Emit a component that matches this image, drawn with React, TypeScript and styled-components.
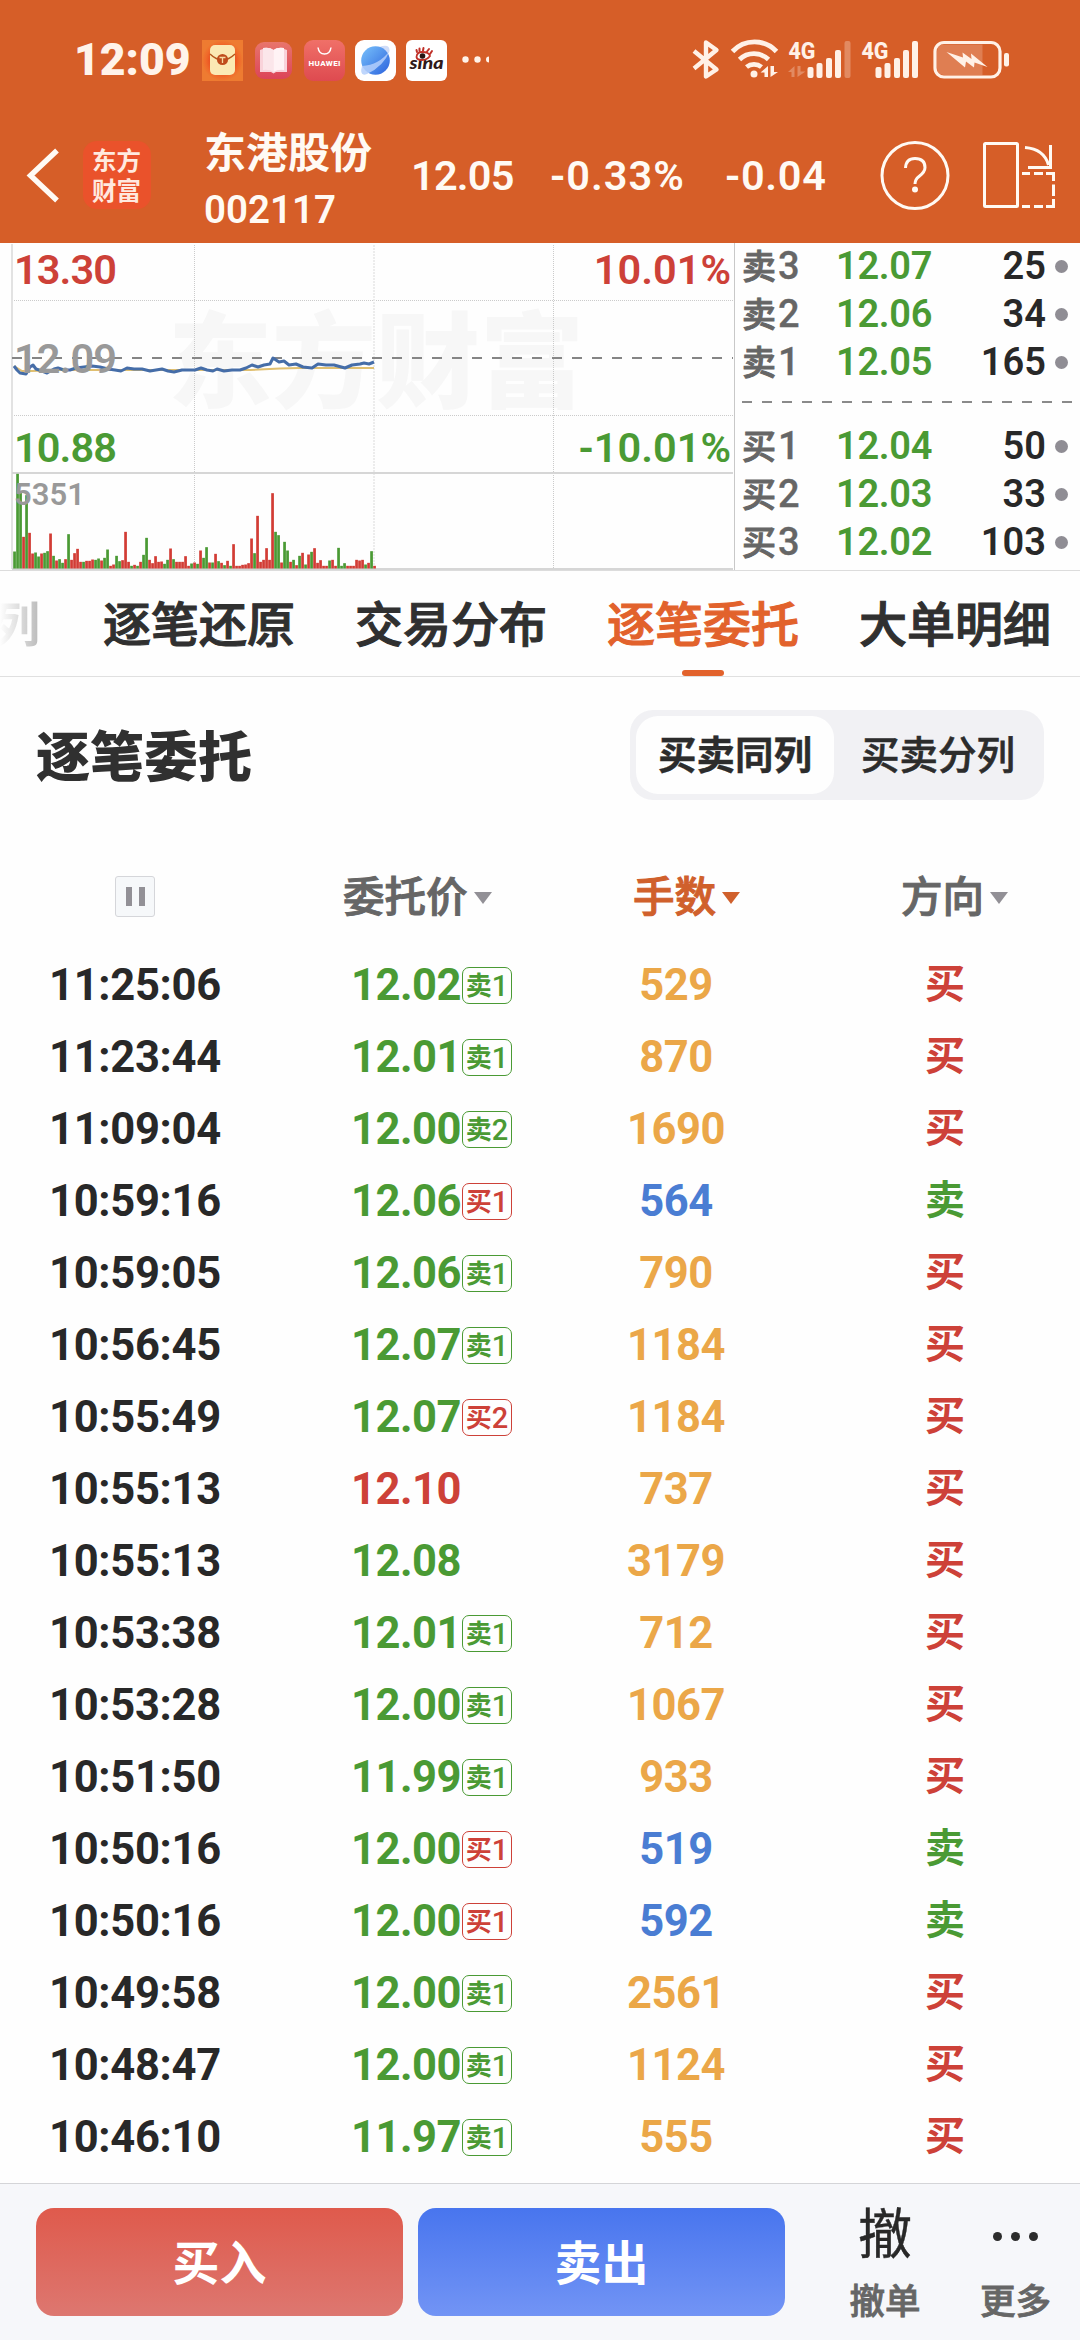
import React from "react";
import styled, { createGlobalStyle } from "styled-components";

const RED = "#cd4138";
const GREEN = "#4a9a34";
const ORANGE = "#eba748";
const BLUE = "#4a7dd3";
const BRAND = "#d65e28";

const GlobalStyle = createGlobalStyle`
  * { box-sizing: border-box; }
  body {
    margin: 0;
    background: #fefefe;
    font-family: Roboto, "Noto Sans CJK SC", sans-serif;
  }
`;

const Page = styled.div`
  width: 1080px;
  height: 2340px;
  display: flex;
  flex-direction: column;
  overflow: hidden;
  background: #fefefe;
  color: #282828;
  white-space: nowrap;
`;

/* ---------- top area ---------- */

const Top = styled.header`
  height: 243px;
  flex: none;
  background: ${BRAND};
  color: #fffaf4;
`;

const StatusBar = styled.div`
  height: 120px;
  padding: 0 70px 0 74px;
  display: flex;
  align-items: center;
`;

const Clock = styled.span`
  width: 128px;
  font-size: 44.5px;
  font-weight: 900;
  line-height: 60px;
  color: #fff3ea;
`;

const AppIcons = styled.div`
  display: flex;
  align-items: center;
`;

const StatusGlyphs = styled.div`
  margin-left: auto;
  display: flex;
  align-items: center;
`;

const NavBar = styled.div`
  height: 123px;
  display: flex;
  align-items: flex-start;
`;

const BackArrow = styled.svg`
  width: 36px;
  height: 60px;
  margin: 25px 0 0 25px;
`;

const Logo = styled.div`
  width: 68px;
  height: 68px;
  margin: 21px 0 0 22px;
  border-radius: 14px;
  background: #ea522b;
  color: #ffe9df;
  padding: 4px 0 0 9px;
  font: 700 24.5px/30px "Noto Sans CJK SC", sans-serif;
  white-space: normal;
  word-break: break-all;
`;

const StockName = styled.div`
  width: 207px;
  margin: 4px 0 0 53px;
  display: flex;
  flex-direction: column;
`;

const Name = styled.span`
  font-size: 42px;
  line-height: 60px;
  font-weight: 700;
`;

const Code = styled.span`
  font-size: 38.5px;
  line-height: 52px;
  font-weight: 600;
`;

const Quote = styled.span<{ $w: number; $ls?: number }>`
  width: ${(p) => p.$w}px;
  margin-top: 31px;
  font-size: 41.5px;
  line-height: 50px;
  font-weight: 600;
  letter-spacing: ${(p) => p.$ls ?? 0}px;
`;

const HelpIcon = styled.svg`
  width: 72px;
  height: 72px;
  margin-top: 20px;
`;

const RotateIcon = styled.svg`
  width: 78px;
  height: 72px;
  margin: 19px 0 0 30px;
`;

/* ---------- chart + order book ---------- */

const Market = styled.section`
  height: 328px;
  flex: none;
  display: flex;
  border-bottom: 1px solid #dcdcdc;
`;

const ChartPane = styled.div`
  width: 735px;
  height: 327px;
  position: relative;
  isolation: isolate;
  border-right: 1px solid #c8c8c8;
`;

const ChartSvg = styled.svg`
  display: block;
  width: 734px;
  height: 327px;
`;

const Watermark = styled.span`
  position: absolute;
  left: 168px;
  top: 50px;
  z-index: -1;
  color: #f7f7f7;
  font: 900 104px/124px "Noto Sans CJK SC", sans-serif;
`;

const AxisLabel = styled.span<{ $top: number; $color: string; $right?: boolean; $small?: boolean }>`
  position: absolute;
  top: ${(p) => p.$top}px;
  ${(p) => (p.$right ? "right: 3px;" : "left: 14px;")}
  color: ${(p) => p.$color};
  font-size: ${(p) => (p.$small ? 31 : 41.5)}px;
  letter-spacing: ${(p) => (p.$right || p.$small ? 0 : -0.9)}px;
  line-height: 50px;
  font-weight: 600;
`;

const Book = styled.div`
  flex: 1;
  padding-left: 7px;
`;

const BookRow = styled.div`
  height: 48px;
  display: flex;
  align-items: center;
  font-size: 38px;
  line-height: 48px;
  font-weight: 600;
  & > * { position: relative; top: -1px; }
`;

const BookSide = styled.span`
  width: 94px;
  color: #666;
  font-size: 34px;
  font-weight: 500;
  -webkit-text-stroke: 0.9px currentColor;
  & > b {
    font-size: 38px;
    font-weight: 500;
    margin-left: 2px;
    -webkit-text-stroke: 0.3px currentColor;
  }
`;

const BookPrice = styled.span`
  width: 104px;
  color: ${GREEN};
  letter-spacing: -0.3px;
`;

const BookVolume = styled.span`
  width: 106px;
  text-align: right;
`;

const Dot = styled.i`
  width: 13px;
  height: 13px;
  margin-left: 9px;
  border-radius: 50%;
  background: #8f8d94;
`;

const BookDivider = styled.div`
  height: 2px;
  width: 330px;
  margin: 14px 0 20px;
  background: repeating-linear-gradient(90deg, #8a8a8a 0 10px, transparent 10px 20px);
`;

/* ---------- tabs ---------- */

const Tabs = styled.nav`
  height: 106px;
  flex: none;
  display: flex;
  justify-content: flex-start;
  gap: 60px;
  border-bottom: 1px solid #e0e0e0;
`;

const Tab = styled.div<{ $active?: boolean }>`
  height: 105px;
  display: flex;
  flex-direction: column;
  align-items: center;
  justify-content: space-between;
  font-size: 48px;
  line-height: 109px;
  font-weight: 500;
  color: ${(p) => (p.$active ? "#e2622c" : "#303030")};
  -webkit-text-stroke: 1.1px currentColor;
  & > span { height: 98px; }
`;

const CutTab = styled.div`
  width: 40px;
  margin-right: 3px;
  flex: none;
  display: flex;
  justify-content: flex-end;
  font-size: 48px;
  line-height: 109px;
  font-weight: 700;
  overflow: hidden;
  color: transparent;
  background: linear-gradient(90deg, #fefefe 0, #b9b9b9 40px);
  background-clip: text;
  -webkit-background-clip: text;
`;

const Underline = styled.i`
  width: 42px;
  height: 6px;
  border-radius: 3px;
  background: #e2622c;
`;

/* ---------- order list ---------- */

const TitleRow = styled.div`
  height: 157px;
  flex: none;
  padding: 33px 36px 0;
  display: flex;
  justify-content: space-between;
  align-items: flex-start;
`;

const Title = styled.h1`
  margin: 0;
  font-size: 54px;
  line-height: 98px;
  font-weight: 900;
  color: #303030;
`;

const Segmented = styled.div`
  width: 414px;
  height: 90px;
  padding: 6px;
  display: flex;
  border-radius: 23px;
  background: #f1f1f4;
`;

const Segment = styled.div<{ $on?: boolean }>`
  width: ${(p) => (p.$on ? 198 : 208)}px;
  flex: none;
  height: 78px;
  display: flex;
  justify-content: center;
  border-radius: 22px;
  font-size: 38.5px;
  line-height: 80px;
  font-weight: ${(p) => (p.$on ? 700 : 500)};
  -webkit-text-stroke: ${(p) => (p.$on ? 0.4 : 0.6)}px currentColor;
  color: #2c2c2c;
  background: ${(p) => (p.$on ? "#fefefe" : "transparent")};
`;

const HeadRow = styled.div`
  height: 114px;
  flex: none;
  padding-top: 26px;
  display: flex;
`;

const HeadCell = styled.div<{ $w: number; $pad: number; $active?: boolean }>`
  width: ${(p) => p.$w}px;
  padding-left: ${(p) => p.$pad}px;
  height: 76px;
  display: flex;
  align-items: center;
  gap: 6px;
  font-size: 41.5px;
  line-height: 76px;
  font-weight: 500;
  -webkit-text-stroke: 1px currentColor;
  color: ${(p) => (p.$active ? "#d0602c" : "#666")};
`;

const Caret = styled.i<{ $active?: boolean }>`
  border: 9px solid transparent;
  border-bottom: 0;
  border-top: 12px solid ${(p) => (p.$active ? "#d0602c" : "#929096")};
`;

const PauseBox = styled.div`
  width: 40px;
  height: 41px;
  margin-bottom: 3px;
  display: flex;
  align-items: center;
  justify-content: center;
  gap: 7px;
  border: 1.5px solid #d5d6da;
  border-radius: 3px;
  background: #f6f8fa;
  & > i { width: 6px; height: 19px; background: #929096; }
`;

const Row = styled.div`
  height: 72px;
  flex: none;
  display: flex;
  align-items: center;
  font-size: 43.5px;
  line-height: 72px;
  font-weight: 700;
  & > span { flex: none; }
`;

const Time = styled.span`
  width: 351px;
  padding: 3px 0 0 49px;
  letter-spacing: -0.3px;
`;

const Price = styled.span<{ $color: string }>`
  width: 111px;
  padding-top: 3px;
  color: ${(p) => p.$color};
  letter-spacing: -0.5px;
`;

const BadgeCell = styled.span`
  width: 114px;
  display: flex;
  align-items: center;
`;

const Badge = styled.span<{ $color: string }>`
  width: 50px;
  height: 37px;
  margin-top: 3px;
  border: 1.2px solid ${(p) => p.$color};
  border-radius: 7px;
  color: ${(p) => p.$color};
  display: flex;
  align-items: center;
  justify-content: center;
  font-size: 26px;
  line-height: 34px;
  font-weight: 700;
  & > b { font-size: 29px; font-weight: 500; }
`;

const Lots = styled.span<{ $color: string }>`
  width: 200px;
  padding-top: 3px;
  text-align: center;
  letter-spacing: -0.4px;
  color: ${(p) => p.$color};
`;

const Direction = styled.span<{ $color: string }>`
  width: 304px;
  padding: 2px 0 0 34px;
  text-align: center;
  font-size: 40px;
  font-weight: 700;
  color: ${(p) => p.$color};
`;

/* ---------- bottom bar ---------- */

const BottomBar = styled.footer`
  height: 157px;
  flex: none;
  margin-top: auto;
  padding: 24px 0 0 36px;
  display: flex;
  align-items: flex-start;
  border-top: 1px solid #d4d5d8;
  background: #f6f7fa;
`;

const TradeButton = styled.div<{ $from: string; $to: string }>`
  width: 367px;
  flex: none;
  height: 108px;
  margin-right: 15px;
  border-radius: 18px;
  text-align: center;
  font-size: 47px;
  line-height: 111px;
  font-weight: 700;
  color: #fff;
  background: linear-gradient(${(p) => p.$from}, ${(p) => p.$to});
`;

const Action = styled.div<{ $w: number }>`
  width: ${(p) => p.$w}px;
  flex: none;
  display: flex;
  flex-direction: column;
  align-items: center;
`;

const ActionGlyph = styled.span`
  height: 56px;
  display: flex;
  align-items: center;
  gap: 9px;
  font-size: 54px;
  line-height: 56px;
  font-weight: 400;
  color: #282828;
  -webkit-text-stroke: 0.4px currentColor;
  & > i { width: 9px; height: 9px; border-radius: 50%; background: #2c2c2c; }
`;

const ActionLabel = styled.span`
  margin-top: 13px;
  font-size: 35.5px;
  line-height: 50px;
  font-weight: 500;
  -webkit-text-stroke: 0.8px currentColor;
  color: #666;
`;

/* ---------- data ---------- */

type Order = [time: string, price: string, tag: string, lots: number, dir: "买" | "卖"];

const orders: Order[] = [
  ["11:25:06", "12.02", "卖1", 529, "买"],
  ["11:23:44", "12.01", "卖1", 870, "买"],
  ["11:09:04", "12.00", "卖2", 1690, "买"],
  ["10:59:16", "12.06", "买1", 564, "卖"],
  ["10:59:05", "12.06", "卖1", 790, "买"],
  ["10:56:45", "12.07", "卖1", 1184, "买"],
  ["10:55:49", "12.07", "买2", 1184, "买"],
  ["10:55:13", "12.10", "", 737, "买"],
  ["10:55:13", "12.08", "", 3179, "买"],
  ["10:53:38", "12.01", "卖1", 712, "买"],
  ["10:53:28", "12.00", "卖1", 1067, "买"],
  ["10:51:50", "11.99", "卖1", 933, "买"],
  ["10:50:16", "12.00", "买1", 519, "卖"],
  ["10:50:16", "12.00", "买1", 592, "卖"],
  ["10:49:58", "12.00", "卖1", 2561, "买"],
  ["10:48:47", "12.00", "卖1", 1124, "买"],
  ["10:46:10", "11.97", "卖1", 555, "买"],
];

const asks = [["卖", "3", "12.07", "25"], ["卖", "2", "12.06", "34"], ["卖", "1", "12.05", "165"]];
const bids = [["买", "1", "12.04", "50"], ["买", "2", "12.03", "33"], ["买", "3", "12.02", "103"]];

const volumes = (
  "51g 284g 230g 95r 220g 107r 45r 48g 36g 45r 47g 52g 105r 38g 24r 28g 17g 28r 103g 26r 46r 59r 20r 20g 23r 23r 27r 26g 30g 24r " +
  "32g 57g 8r 12r 38g 22g 25r 110r 20r 8g 11r 8g 20r 41g 92g 26r 16r 37r 20r 21r 14g 26g 60r 28g 20r 20r 20r 37r 8r 15g " +
  "18r 14g 54r 32g 64g 18r 18g 44r 22g 17r 10g 23r 8g 73r 8r 8r 11r 12r 16r 90r 46g 158r 20r 26r 61r 26r 226r 110g 100g 18r " +
  "80g 54g 20r 26g 10r 38g 47r 12g 42r 50g 61r 17r 25r 8r 8r 24g 26r 8r 62g 8g 16g 8r 8r 8r 26r 24r 26r 12g 17r 52g 8r"
).split(" ").map((s) => ({ h: parseInt(s, 10) / 3, up: s.endsWith("r") }));

const pricePath =
  "M14 123 L17 127 L20 130 L26 131 L30 124 L33 122 L36 126 L42 128 L47 130 L54 126 L58 125 L64 127 L70 127 L76 125 L84 124 L92 123 L100 124 L108 126 L115 127 L121 128 L127 125 L134 126 L142 126 L150 128 L162 126 L168 128 L174 129 L182 127 L188 127 L195 127 L201 125 L207 127 L213 128 L217 126 L224 128 L232 127 L240 127 L246 125 L252 122 L258 124 L264 122 L270 121 L273 115 L279 119 L284 118 L289 122 L296 121 L303 124 L312 125 L318 121 L326 122 L334 122 L345 125 L352 122 L360 121 L364 120 L369 121 L374 119";

const avgPath = "M14 123 L22 128 L32 128 L60 127 L100 127 L160 127 L250 127 L280 125.5 L300 125 L374 125";

/* ---------- drawings ---------- */

const Chart = () => (
  <ChartSvg viewBox="0 0 734 327">
    <g stroke="#cbcbcb" strokeWidth="1" strokeDasharray="1 1" fill="none">
      <path d="M12 57.5H733M12 172.5H733" />
      <path d="M194.5 2V326M553.5 2V326" />
    </g>
    <path d="M374 2V326" stroke="#ececec" strokeWidth="2" strokeDasharray="2 1" />
    <path d="M12 1V326" stroke="#e2e2e2" strokeWidth="2" />
    <path d="M12 230H733M12 326H733" stroke="#d6d6d6" strokeWidth="2" />
    <path d="M12 115H733" stroke="#858585" strokeWidth="2" strokeDasharray="10 10" />
    <path d={avgPath} stroke="#e0bf70" strokeWidth="2" fill="none" />
    <path d={pricePath} stroke="#456da8" strokeWidth="3" strokeLinejoin="round" fill="none" />
    {volumes.map((v, i) => (
      <rect key={i} x={13.2 + i * 3} y={325.5 - v.h} width="2.7" height={v.h} fill={v.up ? "#d23c35" : "#4a9a34"} />
    ))}
  </ChartSvg>
);

const StatusApps = () => (
  <svg width="290" height="44" viewBox="202 38 290 44">
    <defs>
      <radialGradient id="envBg">
        <stop offset="0.5" stopColor="#e8451c" />
        <stop offset="0.8" stopColor="#f0692a" />
        <stop offset="1" stopColor="#ee7b31" />
      </radialGradient>
      <linearGradient id="bookBg" x1="0" y1="0" x2="0" y2="1">
        <stop offset="0" stopColor="#e8756c" />
        <stop offset="1" stopColor="#dc4458" />
      </linearGradient>
      <linearGradient id="hwBg" x1="0" y1="0" x2="0" y2="1">
        <stop offset="0" stopColor="#f07068" />
        <stop offset="1" stopColor="#de4a50" />
      </linearGradient>
      <linearGradient id="globe" x1="0" y1="0" x2="1" y2="1">
        <stop offset="0" stopColor="#79c2fb" />
        <stop offset="1" stopColor="#2b62dd" />
      </linearGradient>
    </defs>
    <rect x="202" y="40" width="41" height="41" fill="url(#envBg)" />
    <rect x="210" y="45" width="25" height="30" rx="5" fill="#fbe9b4" />
    <path d="M210 54Q222.500 66 235 54" fill="none" stroke="#b4561c" strokeWidth="1.4" />
    <circle cx="222.500" cy="59.500" r="5.600" fill="#c04c1c" />
    <path d="M219.500 57.500H225.500M222.500 57.500V63" stroke="#f7d9a0" strokeWidth="1.300" />
    <rect x="255" y="42" width="37" height="37" rx="9" fill="url(#bookBg)" />
    <path d="M260 50L263 49V48Q270 47 273.500 50Q277 47 284 48V49L287 50V72H276L273.500 73.500L271 72H260Z" fill="#f9d3da" />
    <path d="M263 48Q270 47 273.500 50V72Q269 69 263 70Z" fill="#fbe6ea" />
    <path d="M284 48Q277 47 273.500 50V72Q278 69 284 70Z" fill="#fff3f5" />
    <rect x="304" y="40" width="41" height="41" rx="9" fill="url(#hwBg)" />
    <path d="M318 47.500Q319 54 324.500 54Q330 54 331 47.500" fill="none" stroke="#fff" strokeWidth="1.500" />
    <text x="324.500" y="66" textAnchor="middle" textLength="32" fontFamily="Roboto, sans-serif" fontSize="8" fontWeight="800" fill="#fff">HUAWEI</text>
    <rect x="355" y="40" width="41" height="41" rx="9" fill="#fff" />
    <path d="M379 47Q390 43 389.500 51L386 56Z" fill="#cfdcf8" />
    <circle cx="375.500" cy="60.500" r="14.300" fill="url(#globe)" />
    <path d="M362 66Q359 77 367 74Q384 66 389.500 51Q379 65 362 66Z" fill="#b4cffb" fillOpacity="0.85" />
    <rect x="406" y="40" width="41" height="41" rx="6" fill="#fff" />
    <text x="426.500" y="68.500" textAnchor="middle" textLength="34" lengthAdjust="spacingAndGlyphs" fontFamily="Lato, sans-serif" fontSize="17" fontWeight="900" fontStyle="italic" fill="#30191a">sina</text>
    <path d="M416.500 57Q417 52 422 52Q429 52 430 56Q427 60 422 60Q417 60 416.500 57Z" fill="#fff" stroke="#c03028" strokeWidth="1.800" />
    <circle cx="422.500" cy="56" r="2.800" fill="#261312" />
    <path d="M417 52L416.500 50M419.500 51V48.500M423 50.500L423.500 48M427 51.500L429 49M430 54L432 51" stroke="#c03028" strokeWidth="2" strokeLinecap="round" />
    <circle cx="465.500" cy="59.500" r="3.200" fill="#fff3ea" />
    <circle cx="477.500" cy="59.500" r="3.200" fill="#fff3ea" />
    <path d="M489 56.500A3 3 0 0 0 489 62.500Z" fill="#fff3ea" />
  </svg>
);

const StatusRight = () => (
  <svg width="318" height="60" viewBox="692 30 318 60" fill="#fff1e7">
    <g fill="none" stroke="#fff1e7" strokeLinejoin="round">
      <path d="M694 51L716.500 69.500L706 76.500V42.500L716.500 50L694 68.500" strokeWidth="4.400" />
      <path d="M732.500 51.500A30 30 0 0 1 776.500 51.500" strokeWidth="4.800" />
      <path d="M739.500 59.500A21 21 0 0 1 768.500 59.500" strokeWidth="4.800" />
      <path d="M746.500 67A12 12 0 0 1 761.500 67" strokeWidth="4.800" />
    </g>
    <circle cx="754" cy="74" r="3.500" />
    <path d="M768 66V77H764.500V72.500H760.500ZM770.500 66V77L778 72H774V66Z" />
    <text x="788.500" y="59" textLength="27" lengthAdjust="spacingAndGlyphs" fontFamily="Roboto, sans-serif" fontSize="24.500" fontWeight="800">4G</text>
    <path d="M794.500 66V77H791.500V72H788ZM797.500 66V77L805.500 71.500H800.500V66Z" opacity="0.300" />
    <rect x="807.500" y="67" width="6" height="11" rx="2" />
    <rect x="816.500" y="63" width="6" height="15" rx="2" />
    <rect x="826" y="58" width="6" height="20" rx="2" />
    <rect x="835" y="50" width="6" height="28" rx="2" />
    <rect x="844.500" y="41" width="6" height="37" rx="2" opacity="0.300" />
    <text x="861.500" y="59" textLength="27" lengthAdjust="spacingAndGlyphs" fontFamily="Roboto, sans-serif" fontSize="24.500" fontWeight="800">4G</text>
    <rect x="875.500" y="67" width="6" height="11" rx="2" />
    <rect x="884.500" y="63" width="6" height="15" rx="2" />
    <rect x="894" y="58" width="6" height="20" rx="2" />
    <rect x="903" y="50" width="6" height="28" rx="2" />
    <rect x="912" y="41" width="6" height="37" rx="2" />
    <rect x="935" y="42.500" width="65" height="34.500" rx="9" fill="none" stroke="#fff1e7" strokeWidth="3.200" />
    <path d="M944 44.500H982.500V75H944Q937 75 937 68V51.500Q937 44.500 944 44.500Z" opacity="0.220" />
    <path d="M946.500 52L963 57.500L962.500 52.500L971.500 59L971 53.500L987.500 67L974.500 62.500L974 67.500L966 61.500L965 67.500Z" />
    <rect x="1004" y="53" width="5" height="13.500" rx="2" />
  </svg>
);

const HeaderCell = ({ label, w, pad, active }: { label: string; w: number; pad: number; active?: boolean }) => (
  <HeadCell $w={w} $pad={pad} $active={active}>
    {label}
    <Caret $active={active} />
  </HeadCell>
);

const BookLines = ({ rows }: { rows: string[][] }) => (
  <>
    {rows.map(([side, level, price, vol]) => (
      <BookRow key={side + level}>
        <BookSide>{side}<b>{level}</b></BookSide>
        <BookPrice>{price}</BookPrice>
        <BookVolume>{vol}</BookVolume>
        <Dot />
      </BookRow>
    ))}
  </>
);

const priceColor = (price: string) => (parseFloat(price) > 12.09 ? RED : GREEN);

export default function App() {
  return (
    <Page>
      <GlobalStyle />
      <Top>
        <StatusBar>
          <Clock>12:09</Clock>
          <AppIcons><StatusApps /></AppIcons>
          <StatusGlyphs><StatusRight /></StatusGlyphs>
        </StatusBar>
        <NavBar>
          <BackArrow viewBox="0 0 36 60" fill="none" stroke="#fffaf4" strokeWidth="5.400">
            <path d="M32 5.500L5.500 30.500L32 55.500" />
          </BackArrow>
          <Logo>东方财富</Logo>
          <StockName>
            <Name>东港股份</Name>
            <Code>002117</Code>
          </StockName>
          <Quote $w={139} $ls={-0.8}>12.05</Quote>
          <Quote $w={175} $ls={1}>-0.33%</Quote>
          <Quote $w={154} $ls={0.7}>-0.04</Quote>
          <HelpIcon viewBox="0 0 72 72" fill="none" stroke="#fffaf4" strokeWidth="3">
            <circle cx="36" cy="35.500" r="33" />
            <path d="M26.500 28Q27 18.500 36 18.500Q46 18.500 46 27.500Q46 32 40 36.500Q36 39.500 36 44" />
            <circle cx="36" cy="49.500" r="3" fill="#fffaf4" stroke="none" />
          </HelpIcon>
          <RotateIcon viewBox="0 0 78 72" fill="none" stroke="#fffaf4" strokeWidth="3">
            <rect x="3.500" y="4.500" width="33" height="63" rx="1" />
            <path d="M44 8.500Q63 10 67.500 26M69.500 6V28.500H47" />
            <path d="M41 34.500H49M53 34.500H62M65 34.500H72.500V42M72.500 45.500V57M72.500 60V67.500H65M62 67.500H53M49 67.500H41" />
          </RotateIcon>
        </NavBar>
      </Top>

      <Market>
        <ChartPane>
          <Watermark>东方财富</Watermark>
          <Chart />
          <AxisLabel $top={2} $color={RED}>13.30</AxisLabel>
          <AxisLabel $top={91} $color="#999">12.09</AxisLabel>
          <AxisLabel $top={180} $color={GREEN}>10.88</AxisLabel>
          <AxisLabel $top={2} $color={RED} $right>10.01%</AxisLabel>
          <AxisLabel $top={180} $color={GREEN} $right>-10.01%</AxisLabel>
          <AxisLabel $top={227} $color="#999" $small>5351</AxisLabel>
        </ChartPane>
        <Book>
          <BookLines rows={asks} />
          <BookDivider />
          <BookLines rows={bids} />
        </Book>
      </Market>

      <Tabs>
        <CutTab>列</CutTab>
        <Tab><span>逐笔还原</span></Tab>
        <Tab><span>交易分布</span></Tab>
        <Tab $active><span>逐笔委托</span><Underline /></Tab>
        <Tab><span>大单明细</span></Tab>
      </Tabs>

      <TitleRow>
        <Title>逐笔委托</Title>
        <Segmented>
          <Segment $on>买卖同列</Segment>
          <Segment>买卖分列</Segment>
        </Segmented>
      </TitleRow>

      <HeadRow>
        <HeadCell $w={343} $pad={115}><PauseBox><i /><i /></PauseBox></HeadCell>
        <HeaderCell label="委托价" w={290} pad={0} />
        <HeaderCell label="手数" w={268} pad={0} active />
        <HeaderCell label="方向" w={179} pad={0} />
      </HeadRow>

      {orders.map(([time, price, tag, lots, dir], i) => (
        <Row key={i}>
          <Time>{time}</Time>
          <Price $color={priceColor(price)}>{price}</Price>
          <BadgeCell>
            {tag && (
              <Badge $color={tag[0] === "卖" ? GREEN : RED}>{tag[0]}<b>{tag[1]}</b></Badge>
            )}
          </BadgeCell>
          <Lots $color={dir === "买" ? ORANGE : BLUE}>{lots}</Lots>
          <Direction $color={dir === "买" ? RED : GREEN}>{dir}</Direction>
        </Row>
      ))}

      <BottomBar>
        <TradeButton $from="#df5a4c" $to="#dd7770">买入</TradeButton>
        <TradeButton $from="#4875ee" $to="#7294f5">卖出</TradeButton>
        <Action $w={170}>
          <ActionGlyph>撤</ActionGlyph>
          <ActionLabel>撤单</ActionLabel>
        </Action>
        <Action $w={91}>
          <ActionGlyph><i /><i /><i /></ActionGlyph>
          <ActionLabel>更多</ActionLabel>
        </Action>
      </BottomBar>
    </Page>
  );
}
